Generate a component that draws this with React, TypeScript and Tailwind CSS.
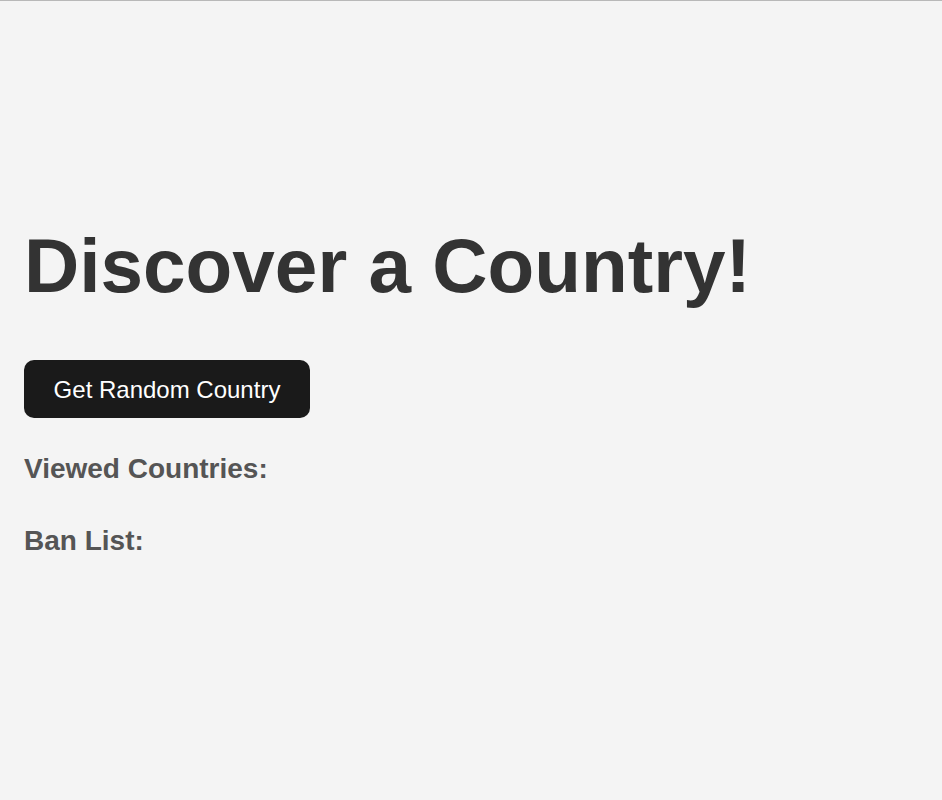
export default function App() {
  return (
    <div
      className="min-h-[800px] w-full bg-[#f4f4f4] border-t border-[#b8b8b8] flex flex-col items-start px-6"
      style={{ fontFamily: '"Liberation Sans", Arial, sans-serif' }}
    >
      <h1 className="mt-[221px] text-[76.5px] leading-[88px] font-bold text-[#333333]">
        Discover a Country!
      </h1>
      <button className="mt-[50px] h-[58px] w-[286px] pt-[2px] rounded-[10px] bg-[#1a1a1a] text-white text-[24px] leading-[28px]">
        Get Random Country
      </button>
      <h2 className="mt-[35px] text-[28px] leading-[32px] font-bold text-[#555555]">
        Viewed Countries:
      </h2>
      <h2 className="mt-[40px] text-[28px] leading-[32px] font-bold text-[#555555]">
        Ban List:
      </h2>
    </div>
  );
}
